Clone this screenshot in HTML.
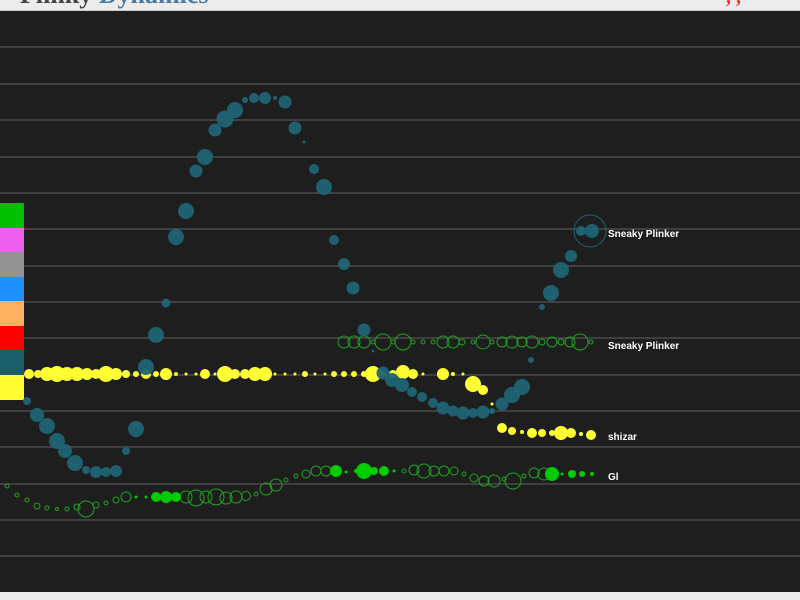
<!DOCTYPE html>
<html><head><meta charset="utf-8"><style>
html,body{margin:0;padding:0;width:800px;height:600px;overflow:hidden;background:#1e1e1e;font-family:"Liberation Sans",sans-serif}
#top{position:absolute;left:0;top:0;width:800px;height:10px;background:#ececec;border-bottom:1px solid #ccc;overflow:hidden}
#top span{position:absolute;top:-20px;font:bold 26px "Liberation Serif",serif;white-space:nowrap}
#bot{position:absolute;left:0;top:592px;width:800px;height:8px;background:#ececec}
svg{position:absolute;left:0;top:0}
</style></head><body>
<div id="top"><span style="left:20px;color:#444">Plinky <span style="position:static;color:#4a7aa8">Dynamics</span></span><span style="left:726px;color:#d33;font-size:20px;top:-14px">, ,</span></div>
<svg width="800" height="592" viewBox="0 0 800 592">
<g stroke="#4a4a4a" stroke-width="1.5">
<line x1="0" x2="800" y1="47" y2="47"/><line x1="0" x2="800" y1="84" y2="84"/><line x1="0" x2="800" y1="120" y2="120"/><line x1="0" x2="800" y1="157" y2="157"/><line x1="0" x2="800" y1="193" y2="193"/><line x1="0" x2="800" y1="229" y2="229"/><line x1="0" x2="800" y1="266" y2="266"/><line x1="0" x2="800" y1="302" y2="302"/><line x1="0" x2="800" y1="338" y2="338"/><line x1="0" x2="800" y1="375" y2="375"/><line x1="0" x2="800" y1="411" y2="411"/><line x1="0" x2="800" y1="447" y2="447"/><line x1="0" x2="800" y1="484" y2="484"/><line x1="0" x2="800" y1="520" y2="520"/><line x1="0" x2="800" y1="556" y2="556"/>
</g>
<rect x="0" y="203" width="24" height="25" fill="#00c000"/>
<rect x="0" y="228" width="24" height="24" fill="#f060f0"/>
<rect x="0" y="252" width="24" height="25" fill="#939393"/>
<rect x="0" y="277" width="24" height="24" fill="#1e90ff"/>
<rect x="0" y="301" width="24" height="25" fill="#ffb060"/>
<rect x="0" y="326" width="24" height="24" fill="#ff0000"/>
<rect x="0" y="350" width="24" height="25" fill="#1a5e6a"/>
<rect x="0" y="375" width="24" height="25" fill="#ffff33"/>
<g fill="none" stroke="#1fa51f" stroke-width="1">
<circle cx="344" cy="342" r="6"/><circle cx="354" cy="342" r="6"/><circle cx="364" cy="342" r="6"/><circle cx="373" cy="342" r="2"/><circle cx="383" cy="342" r="8"/><circle cx="393" cy="342" r="2"/><circle cx="403" cy="342" r="8"/><circle cx="413" cy="342" r="2"/><circle cx="423" cy="342" r="2"/><circle cx="433" cy="342" r="2"/><circle cx="443" cy="342" r="6"/><circle cx="453" cy="342" r="6"/><circle cx="462" cy="342" r="3"/><circle cx="473" cy="342" r="2"/><circle cx="483" cy="342" r="7"/><circle cx="492" cy="342" r="2"/><circle cx="502" cy="342" r="5"/><circle cx="512" cy="342" r="6"/><circle cx="522" cy="342" r="5"/><circle cx="532" cy="342" r="6"/><circle cx="542" cy="342" r="3"/><circle cx="552" cy="342" r="5"/><circle cx="561" cy="342" r="3"/><circle cx="570" cy="342" r="5"/><circle cx="580" cy="342" r="8"/><circle cx="591" cy="342" r="2"/>
</g>
<g fill="#ffff33">
<circle cx="29" cy="374" r="5"/><circle cx="38" cy="374" r="4"/><circle cx="47" cy="374" r="7"/><circle cx="57" cy="374" r="8"/><circle cx="67" cy="374" r="7"/><circle cx="77" cy="374" r="7"/><circle cx="87" cy="374" r="6"/><circle cx="96" cy="374" r="5"/><circle cx="106" cy="374" r="8"/><circle cx="116" cy="374" r="6"/><circle cx="126" cy="374" r="4"/><circle cx="136" cy="374" r="3"/><circle cx="146" cy="374" r="5"/><circle cx="156" cy="374" r="3"/><circle cx="166" cy="374" r="6"/><circle cx="176" cy="374" r="2"/><circle cx="186" cy="374" r="1.5"/><circle cx="196" cy="374" r="1.5"/><circle cx="205" cy="374" r="5"/><circle cx="215" cy="374" r="1.5"/><circle cx="225" cy="374" r="8"/><circle cx="235" cy="374" r="5"/><circle cx="245" cy="374" r="5"/><circle cx="255" cy="374" r="7"/><circle cx="265" cy="374" r="7"/><circle cx="275" cy="374" r="1.5"/><circle cx="285" cy="374" r="1.5"/><circle cx="295" cy="374" r="1.5"/><circle cx="305" cy="374" r="3"/><circle cx="315" cy="374" r="1.5"/><circle cx="325" cy="374" r="1.5"/><circle cx="334" cy="374" r="3"/><circle cx="344" cy="374" r="3"/><circle cx="354" cy="374" r="3"/><circle cx="364" cy="374" r="3"/><circle cx="373" cy="374" r="8"/><circle cx="383" cy="374" r="3"/><circle cx="393" cy="374" r="4"/><circle cx="403" cy="372" r="7"/><circle cx="413" cy="374" r="5"/><circle cx="423" cy="374" r="1.5"/><circle cx="443" cy="374" r="6"/><circle cx="453" cy="374" r="2"/><circle cx="463" cy="374" r="1.5"/><circle cx="473" cy="384" r="8"/><circle cx="483" cy="390" r="5"/><circle cx="492" cy="404" r="1.5"/><circle cx="502" cy="428" r="5"/><circle cx="512" cy="431" r="4"/><circle cx="522" cy="432" r="2"/><circle cx="532" cy="433" r="5"/><circle cx="542" cy="433" r="4"/><circle cx="552" cy="433" r="3"/><circle cx="561" cy="433" r="7"/><circle cx="571" cy="433" r="5"/><circle cx="581" cy="434" r="2"/><circle cx="591" cy="435" r="5"/>
</g>
<g fill="#1f6474" fill-opacity="0.95">
<circle cx="27" cy="401" r="4"/><circle cx="37" cy="415" r="7"/><circle cx="47" cy="426" r="8"/><circle cx="57" cy="441" r="8"/><circle cx="65" cy="451" r="7"/><circle cx="75" cy="463" r="8"/><circle cx="86" cy="470" r="4"/><circle cx="96" cy="472" r="6"/><circle cx="106" cy="472" r="5"/><circle cx="116" cy="471" r="6"/><circle cx="126" cy="451" r="4"/><circle cx="136" cy="429" r="8"/><circle cx="146" cy="367" r="8"/><circle cx="156" cy="335" r="8"/><circle cx="166" cy="303" r="4.5"/><circle cx="176" cy="237" r="8"/><circle cx="186" cy="211" r="8"/><circle cx="196" cy="171" r="6.5"/><circle cx="205" cy="157" r="8"/><circle cx="215" cy="130" r="6.5"/><circle cx="225" cy="119" r="8.5"/><circle cx="235" cy="110" r="8"/><circle cx="245" cy="100" r="3"/><circle cx="254" cy="98" r="5"/><circle cx="265" cy="98" r="6"/><circle cx="275" cy="98" r="2"/><circle cx="285" cy="102" r="6.5"/><circle cx="295" cy="128" r="6.5"/><circle cx="304" cy="142" r="1.5"/><circle cx="314" cy="169" r="5"/><circle cx="324" cy="187" r="8"/><circle cx="334" cy="240" r="5"/><circle cx="344" cy="264" r="6"/><circle cx="353" cy="288" r="6.5"/><circle cx="364" cy="330" r="6.5"/><circle cx="373" cy="351" r="1.5"/><circle cx="383" cy="373" r="6.5"/><circle cx="392" cy="380" r="7"/><circle cx="402" cy="385" r="7"/><circle cx="412" cy="392" r="5"/><circle cx="422" cy="397" r="5"/><circle cx="433" cy="403" r="5"/><circle cx="443" cy="408" r="6.5"/><circle cx="453" cy="411" r="5.5"/><circle cx="463" cy="413" r="6.5"/><circle cx="473" cy="413" r="5"/><circle cx="483" cy="412" r="6.5"/><circle cx="492" cy="411" r="3"/><circle cx="502" cy="404" r="6.5"/><circle cx="512" cy="395" r="8"/><circle cx="522" cy="387" r="8"/><circle cx="531" cy="360" r="3"/><circle cx="542" cy="307" r="3"/><circle cx="551" cy="293" r="8"/><circle cx="561" cy="270" r="8"/><circle cx="571" cy="256" r="6"/><circle cx="581" cy="231" r="5"/><circle cx="592" cy="231" r="7"/>
</g>
<circle cx="590" cy="231" r="16" fill="none" stroke="#1f6474" stroke-width="1"/>
<g fill="none" stroke="#1fa51f" stroke-width="1">
<circle cx="7" cy="486" r="2"/><circle cx="17" cy="495" r="2"/><circle cx="27" cy="500" r="2"/><circle cx="37" cy="506" r="3"/><circle cx="47" cy="508" r="2"/><circle cx="57" cy="509" r="1.5"/><circle cx="67" cy="509" r="2"/><circle cx="77" cy="507" r="3"/><circle cx="86" cy="509" r="8"/><circle cx="96" cy="505" r="3"/><circle cx="106" cy="503" r="2"/><circle cx="116" cy="500" r="3"/><circle cx="126" cy="497" r="5"/><circle cx="186" cy="497" r="6"/><circle cx="196" cy="498" r="8"/><circle cx="206" cy="497" r="6"/><circle cx="216" cy="497" r="8"/><circle cx="226" cy="498" r="6"/><circle cx="236" cy="497" r="6"/><circle cx="246" cy="496" r="4.5"/><circle cx="256" cy="494" r="2"/><circle cx="266" cy="489" r="6"/><circle cx="276" cy="485" r="6"/><circle cx="286" cy="480" r="2"/><circle cx="296" cy="476" r="2"/><circle cx="306" cy="474" r="4"/><circle cx="316" cy="471" r="5"/><circle cx="326" cy="471" r="5"/><circle cx="404" cy="471" r="2"/><circle cx="414" cy="470" r="5"/><circle cx="424" cy="471" r="7"/><circle cx="434" cy="471" r="5"/><circle cx="444" cy="471" r="5"/><circle cx="454" cy="471" r="4"/><circle cx="464" cy="474" r="2"/><circle cx="474" cy="478" r="4"/><circle cx="484" cy="481" r="5"/><circle cx="494" cy="481" r="6"/><circle cx="504" cy="479" r="2"/><circle cx="513" cy="481" r="8"/><circle cx="524" cy="476" r="2"/><circle cx="534" cy="473" r="5"/><circle cx="544" cy="474" r="6"/>
</g>
<g fill="#00cc00">
<circle cx="136" cy="497" r="1.5"/><circle cx="146" cy="497" r="1.5"/><circle cx="156" cy="497" r="5"/><circle cx="166" cy="497" r="6"/><circle cx="176" cy="497" r="5"/><circle cx="336" cy="471" r="6"/><circle cx="346" cy="472" r="1.5"/><circle cx="356" cy="471" r="2"/><circle cx="364" cy="471" r="8"/><circle cx="374" cy="471" r="4"/><circle cx="384" cy="471" r="5"/><circle cx="394" cy="471" r="1.5"/><circle cx="552" cy="474" r="7"/><circle cx="562" cy="474" r="1.5"/><circle cx="572" cy="474" r="4"/><circle cx="582" cy="474" r="3"/><circle cx="592" cy="474" r="2"/>
</g>
<g fill="#fff" font-family="Liberation Sans, sans-serif" font-weight="bold" font-size="10">
<text x="608" y="237">Sneaky Plinker</text>
<text x="608" y="349">Sneaky Plinker</text>
<text x="608" y="440">shizar</text>
<text x="608" y="480">Gl</text>
</g>
</svg>
<div id="bot"></div>
</body></html>
